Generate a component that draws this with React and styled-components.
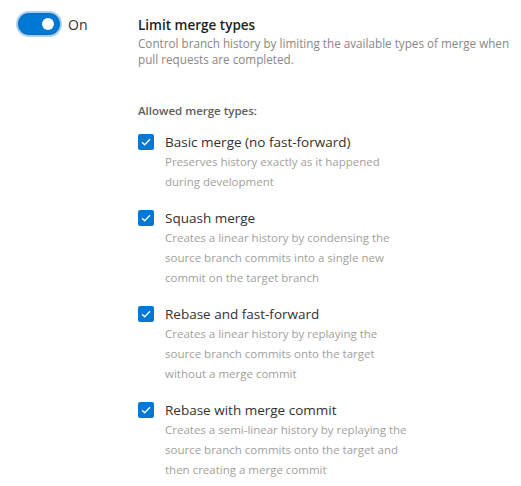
import React from "react";
import styled, { createGlobalStyle } from "styled-components";

const GlobalStyle = createGlobalStyle`
  html, body {
    margin: 0;
    padding: 0;
    background: #ffffff;
  }
  body {
    font-family: "Open Sans", "Noto Sans", sans-serif;
    color: #323130;
  }
`;

const Page = styled.div`
  display: flex;
  align-items: flex-start;
  padding: 12px 0 0 17px;
  width: 521px;
  height: 486px;
  box-sizing: border-box;
`;

const ToggleWrap = styled.div`
  display: flex;
  align-items: center;
  gap: 7px;
  width: 121px;
  flex-shrink: 0;
`;

const Track = styled.div`
  width: 40px;
  height: 20px;
  margin: 2px;
  border-radius: 10px;
  background: #0078d4;
  box-shadow: 0 0 0 1px #0f6cbd, 0 0 0 3px #a9d0f2;
  display: flex;
  align-items: center;
  justify-content: flex-end;
  padding-right: 5px;
  box-sizing: border-box;
`;

const Knob = styled.span`
  width: 12px;
  height: 12px;
  border-radius: 50%;
  background: #ffffff;
`;

const ToggleLabel = styled.span`
  font-size: 14px;
  color: #323130;
`;

const Content = styled.div`
  display: flex;
  flex-direction: column;
  padding-top: 4px;
`;

const Title = styled.div`
  font-size: 13.5px;
  font-weight: 600;
  line-height: 18px;
  color: #201f1e;
`;

const Lead = styled.div`
  font-size: 11.7px;
  line-height: 16px;
  color: #8a8886;
  margin-top: 1px;
  white-space: nowrap;
`;

const Section = styled.div`
  margin-top: 36px;
  font-size: 11.5px;
  font-weight: 600;
  line-height: 16px;
  color: #605e5c;
`;

const List = styled.div`
  display: flex;
  flex-direction: column;
  gap: 16px;
  margin-top: 13px;
`;

const Item = styled.div`
  display: flex;
  align-items: flex-start;
  gap: 11px;
`;

const Box = styled.span`
  width: 16px;
  height: 16px;
  margin-top: 2px;
  border-radius: 2px;
  background: #0078d4;
  display: flex;
  align-items: center;
  justify-content: center;
  flex-shrink: 0;
`;

const Label = styled.div`
  font-size: 13.5px;
  line-height: 20px;
  color: #323130;
`;

const Desc = styled.div`
  font-size: 11.5px;
  line-height: 20px;
  color: #a19f9d;
  white-space: nowrap;
`;

const Check = () => (
  <svg width="10" height="8" viewBox="0 0 10 8">
    <path d="M1 4.2 L3.7 6.8 L9 1.2" fill="none" stroke="#fff" strokeWidth="1.3" />
  </svg>
);

const items = [
  { label: "Basic merge (no fast-forward)", desc: ["Preserves history exactly as it happened", "during development"] },
  { label: "Squash merge", desc: ["Creates a linear history by condensing the", "source branch commits into a single new", "commit on the target branch"] },
  { label: "Rebase and fast-forward", desc: ["Creates a linear history by replaying the", "source branch commits onto the target", "without a merge commit"] },
  { label: "Rebase with merge commit", desc: ["Creates a semi-linear history by replaying the", "source branch commits onto the target and", "then creating a merge commit"] },
];

export default function App() {
  return (
    <>
      <GlobalStyle />
      <Page>
        <ToggleWrap>
          <Track>
            <Knob />
          </Track>
          <ToggleLabel>On</ToggleLabel>
        </ToggleWrap>
        <Content>
          <Title>Limit merge types</Title>
          <Lead>
            Control branch history by limiting the available types of merge when
            <br />
            pull requests are completed.
          </Lead>
          <Section>Allowed merge types:</Section>
          <List>
            {items.map((it) => (
              <Item key={it.label}>
                <Box>
                  <Check />
                </Box>
                <div>
                  <Label>{it.label}</Label>
                  <Desc>
                    {it.desc.map((d, i) => (
                      <React.Fragment key={i}>
                        {d}
                        {i < it.desc.length - 1 && <br />}
                      </React.Fragment>
                    ))}
                  </Desc>
                </div>
              </Item>
            ))}
          </List>
        </Content>
      </Page>
    </>
  );
}
